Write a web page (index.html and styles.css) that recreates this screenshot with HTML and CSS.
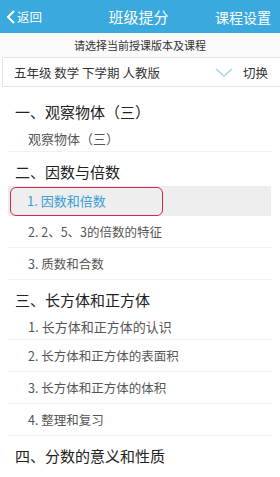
FILE: index.html
```html
<!DOCTYPE html>
<html>
<head>
    <meta charset="UTF-8" />
    <title>班级提分</title>
    <link rel="stylesheet" href="styles.css">
</head>
<body>
    <div class="header">
        <span class="back"><svg width="10" height="16" viewBox="0 0 10 16"><path d="M8 2 L2 8 L8 14" fill="none" stroke="#fff" stroke-width="2"/></svg>返回</span>
        <span class="title">班级提分</span>
        <span class="setting">课程设置</span>
    </div>

    <div class="hint">请选择当前授课版本及课程</div>

    <div class="picker">
        <span class="book">五年级 数学 下学期 人教版</span>
        <svg class="arrow" width="18" height="9" viewBox="0 0 18 9"><path d="M1 1 L9 8 L17 1" fill="none" stroke="#a6d9e6" stroke-width="1.6"/></svg>
        <span class="switch">切换</span>
    </div>

    <div class="list">
        <div class="unit">一、观察物体（三）</div>
        <div class="lesson">观察物体（三）</div>

        <div class="unit">二、因数与倍数</div>
        <div class="lesson active"><span class="mark">1. 因数和倍数</span></div>
        <div class="lesson">2. 2、5、3的倍数的特征</div>
        <div class="lesson">3. 质数和合数</div>

        <div class="unit">三、长方体和正方体</div>
        <div class="lesson">1. 长方体和正方体的认识</div>
        <div class="lesson">2. 长方体和正方体的表面积</div>
        <div class="lesson">3. 长方体和正方体的体积</div>
        <div class="lesson">4. 整理和复习</div>

        <div class="unit">四、分数的意义和性质</div>
    </div>
</body>
</html>
```

FILE: styles.css
```css
body {
    margin: 0;
    font-family: "Noto Sans CJK SC", "Noto Sans", sans-serif;
    background-color: #ffffff;
    color: #222;
}

.header {
    height: 33px;
    background-color: #3aa9de;
    color: #fff;
    display: flex;
    align-items: center;
    justify-content: space-between;
    padding: 0 9px 0 6px;
}

.back {
    display: flex;
    align-items: center;
    font-size: 12.5px;
    width: 80px;
}

.back svg {
    margin-right: 1px;
}

.title {
    font-size: 15px;
}

.setting {
    font-size: 14px;
    width: 80px;
    text-align: right;
}

.hint {
    height: 24px;
    line-height: 24px;
    text-align: center;
    font-size: 11px;
    color: #333;
    background-color: #fafafa;
}

.picker {
    height: 28px;
    margin: 0 0 0 2px;
    border: 1px solid #e6e6e6;
    border-right: none;
    display: flex;
    align-items: center;
    padding: 0 12px 0 11px;
    font-size: 12.5px;
    color: #333;
}

.book {
    flex: 1;
}

.arrow {
    margin-right: 10px;
}

.list {
    padding: 5px 9px 0 8px;
}

.unit {
    font-size: 15px;
    height: 34px;
    line-height: 40px;
    padding-left: 7px;
    color: #222;
}

.lesson {
    font-size: 12.5px;
    color: #555;
    height: 31px;
    line-height: 31px;
    padding-left: 20px;
    border-bottom: 1px solid #f1f1f1;
}

.unit + .lesson {
    font-size: 13px;
    height: 25px;
    line-height: 25px;
}

.lesson.active {
    padding-left: 2px;
    background-color: #eeeeee;
    border-bottom: none;
    height: 30px;
    line-height: normal;
    display: flex;
    align-items: center;
}

.mark {
    box-sizing: border-box;
    width: 153px;
    height: 29px;
    line-height: 26px;
    border: 1.5px solid #d9234a;
    border-radius: 6px;
    padding-left: 16px;
    color: #3a9fd6;
    font-size: 13px;
}
```
